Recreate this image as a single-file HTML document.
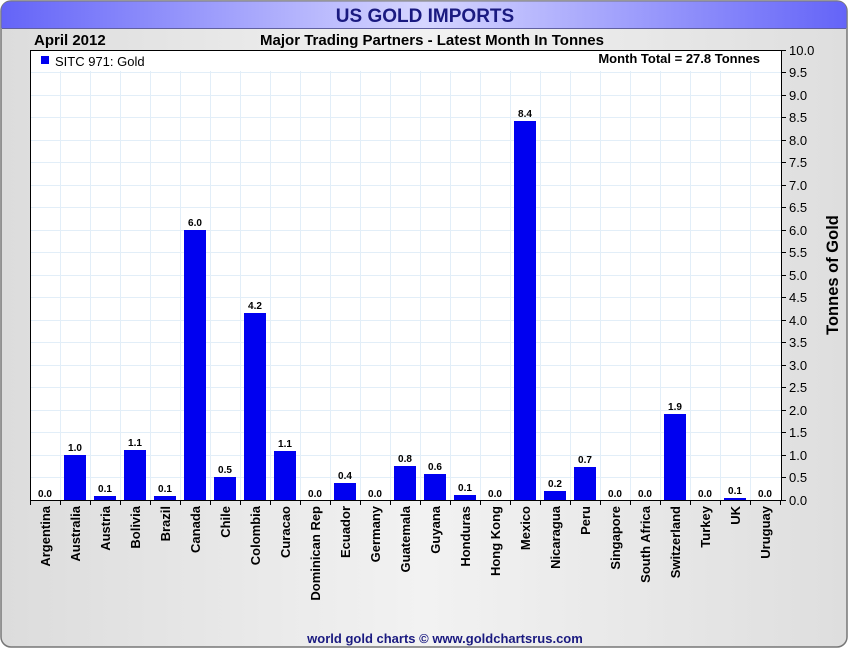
<!DOCTYPE html>
<html><head><style>
html,body{margin:0;padding:0;background:#fff;width:850px;height:650px;overflow:hidden}
svg{display:block;font-family:"Liberation Sans",Arial,sans-serif}
</style></head><body>
<svg width="850" height="650" xmlns="http://www.w3.org/2000/svg">
<defs>
<linearGradient id="tb" x1="0" x2="1" y1="0" y2="0">
<stop offset="0" stop-color="#6464f8"/><stop offset="0.5" stop-color="#d6d6ff"/><stop offset="1" stop-color="#6464f8"/>
</linearGradient>
<linearGradient id="bg" x1="0" x2="1" y1="0" y2="0">
<stop offset="0" stop-color="#dcdcdc"/><stop offset="0.5" stop-color="#f2f2f2"/><stop offset="1" stop-color="#dedede"/>
</linearGradient>
</defs>
<rect x="1" y="1" width="846" height="646" rx="10" fill="url(#bg)" stroke="#777" stroke-width="1.5"/>
<path d="M1.5,28 L1.5,11 Q1.5,1.5 11,1.5 L837,1.5 Q846.5,1.5 846.5,11 L846.5,28 Z" fill="url(#tb)"/>
<line x1="2" y1="28.5" x2="846" y2="28.5" stroke="#6060a0"/>
<text x="425" y="22" text-anchor="middle" font-size="19" font-weight="bold" fill="#1a1a80">US GOLD IMPORTS</text>
<text x="34" y="45" font-size="15" font-weight="bold" fill="#000">April 2012</text>
<text x="432" y="45" text-anchor="middle" font-size="15" font-weight="bold" fill="#000">Major Trading Partners - Latest Month In Tonnes</text>
<rect x="30.5" y="50.5" width="751" height="450" fill="#fff" stroke="#000"/>
<g stroke="#e2eef8" stroke-width="1">
<line x1="60.5" y1="51" x2="60.5" y2="500"/><line x1="90.5" y1="51" x2="90.5" y2="500"/><line x1="120.5" y1="51" x2="120.5" y2="500"/><line x1="150.5" y1="51" x2="150.5" y2="500"/><line x1="180.5" y1="51" x2="180.5" y2="500"/><line x1="210.5" y1="51" x2="210.5" y2="500"/><line x1="240.5" y1="51" x2="240.5" y2="500"/><line x1="270.5" y1="51" x2="270.5" y2="500"/><line x1="300.5" y1="51" x2="300.5" y2="500"/><line x1="330.5" y1="51" x2="330.5" y2="500"/><line x1="360.5" y1="51" x2="360.5" y2="500"/><line x1="390.5" y1="51" x2="390.5" y2="500"/><line x1="420.5" y1="51" x2="420.5" y2="500"/><line x1="450.5" y1="51" x2="450.5" y2="500"/><line x1="480.5" y1="51" x2="480.5" y2="500"/><line x1="510.5" y1="51" x2="510.5" y2="500"/><line x1="540.5" y1="51" x2="540.5" y2="500"/><line x1="570.5" y1="51" x2="570.5" y2="500"/><line x1="600.5" y1="51" x2="600.5" y2="500"/><line x1="630.5" y1="51" x2="630.5" y2="500"/><line x1="660.5" y1="51" x2="660.5" y2="500"/><line x1="690.5" y1="51" x2="690.5" y2="500"/><line x1="720.5" y1="51" x2="720.5" y2="500"/><line x1="750.5" y1="51" x2="750.5" y2="500"/>
<line x1="31" y1="72.5" x2="781" y2="72.5"/><line x1="31" y1="95.5" x2="781" y2="95.5"/><line x1="31" y1="117.5" x2="781" y2="117.5"/><line x1="31" y1="140.5" x2="781" y2="140.5"/><line x1="31" y1="162.5" x2="781" y2="162.5"/><line x1="31" y1="185.5" x2="781" y2="185.5"/><line x1="31" y1="207.5" x2="781" y2="207.5"/><line x1="31" y1="230.5" x2="781" y2="230.5"/><line x1="31" y1="252.5" x2="781" y2="252.5"/><line x1="31" y1="275.5" x2="781" y2="275.5"/><line x1="31" y1="297.5" x2="781" y2="297.5"/><line x1="31" y1="320.5" x2="781" y2="320.5"/><line x1="31" y1="342.5" x2="781" y2="342.5"/><line x1="31" y1="365.5" x2="781" y2="365.5"/><line x1="31" y1="387.5" x2="781" y2="387.5"/><line x1="31" y1="410.5" x2="781" y2="410.5"/><line x1="31" y1="432.5" x2="781" y2="432.5"/><line x1="31" y1="455.5" x2="781" y2="455.5"/><line x1="31" y1="477.5" x2="781" y2="477.5"/>
</g>
<rect x="31" y="51" width="750" height="20" fill="#fff"/>
<rect x="41" y="56" width="8" height="8" fill="#0000f0"/>
<text x="55" y="66" font-size="13" fill="#000">SITC 971: Gold</text>
<text x="760" y="63" text-anchor="end" font-size="13" font-weight="bold" fill="#000">Month Total = 27.8 Tonnes</text>
<g fill="#0000f0">
<rect x="64" y="455" width="22" height="45"/>
<rect x="94" y="496" width="22" height="4"/>
<rect x="124" y="450" width="22" height="50"/>
<rect x="154" y="496" width="22" height="4"/>
<rect x="184" y="230" width="22" height="270"/>
<rect x="214" y="477" width="22" height="23"/>
<rect x="244" y="313" width="22" height="187"/>
<rect x="274" y="451" width="22" height="49"/>
<rect x="334" y="483" width="22" height="17"/>
<rect x="394" y="466" width="22" height="34"/>
<rect x="424" y="474" width="22" height="26"/>
<rect x="454" y="495" width="22" height="5"/>
<rect x="514" y="121" width="22" height="379"/>
<rect x="544" y="491" width="22" height="9"/>
<rect x="574" y="467" width="22" height="33"/>
<rect x="664" y="414" width="22" height="86"/>
<rect x="724" y="498" width="22" height="2"/>
</g>
<g font-size="10" font-weight="bold" text-anchor="middle" fill="#000">
<text x="45" y="497">0.0</text><text x="75" y="451">1.0</text><text x="105" y="492">0.1</text><text x="135" y="446">1.1</text><text x="165" y="492">0.1</text><text x="195" y="226">6.0</text><text x="225" y="473">0.5</text><text x="255" y="309">4.2</text><text x="285" y="447">1.1</text><text x="315" y="497">0.0</text><text x="345" y="479">0.4</text><text x="375" y="497">0.0</text><text x="405" y="462">0.8</text><text x="435" y="470">0.6</text><text x="465" y="491">0.1</text><text x="495" y="497">0.0</text><text x="525" y="117">8.4</text><text x="555" y="487">0.2</text><text x="585" y="463">0.7</text><text x="615" y="497">0.0</text><text x="645" y="497">0.0</text><text x="675" y="410">1.9</text><text x="705" y="497">0.0</text><text x="735" y="494">0.1</text><text x="765" y="497">0.0</text>
</g>
<g stroke="#000">
<line x1="30" y1="500.5" x2="782" y2="500.5"/>
<line x1="781.5" y1="50" x2="781.5" y2="501"/>
<path d="M30.5,500v5M60.5,500v5M90.5,500v5M120.5,500v5M150.5,500v5M180.5,500v5M210.5,500v5M240.5,500v5M270.5,500v5M300.5,500v5M330.5,500v5M360.5,500v5M390.5,500v5M420.5,500v5M450.5,500v5M480.5,500v5M510.5,500v5M540.5,500v5M570.5,500v5M600.5,500v5M630.5,500v5M660.5,500v5M690.5,500v5M720.5,500v5M750.5,500v5M780.5,500v5"/>
<path d="M781,50.5h5M781,72.5h5M781,95.5h5M781,117.5h5M781,140.5h5M781,162.5h5M781,185.5h5M781,207.5h5M781,230.5h5M781,252.5h5M781,275.5h5M781,297.5h5M781,320.5h5M781,342.5h5M781,365.5h5M781,387.5h5M781,410.5h5M781,432.5h5M781,455.5h5M781,477.5h5M781,500.5h5"/>
</g>
<g font-size="13" fill="#000">
<text x="789" y="55">10.0</text><text x="789" y="77">9.5</text><text x="789" y="100">9.0</text><text x="789" y="122">8.5</text><text x="789" y="145">8.0</text><text x="789" y="167">7.5</text><text x="789" y="190">7.0</text><text x="789" y="212">6.5</text><text x="789" y="235">6.0</text><text x="789" y="257">5.5</text><text x="789" y="280">5.0</text><text x="789" y="302">4.5</text><text x="789" y="325">4.0</text><text x="789" y="347">3.5</text><text x="789" y="370">3.0</text><text x="789" y="392">2.5</text><text x="789" y="415">2.0</text><text x="789" y="437">1.5</text><text x="789" y="460">1.0</text><text x="789" y="482">0.5</text><text x="789" y="505">0.0</text>
</g>
<text transform="translate(838,275) rotate(-90)" text-anchor="middle" font-size="16.5" font-weight="bold" fill="#000">Tonnes of Gold</text>
<g font-size="13" font-weight="bold" fill="#000" text-anchor="end">
<text transform="translate(50,506) rotate(-90)">Argentina</text>
<text transform="translate(80,506) rotate(-90)">Australia</text>
<text transform="translate(110,506) rotate(-90)">Austria</text>
<text transform="translate(140,506) rotate(-90)">Bolivia</text>
<text transform="translate(170,506) rotate(-90)">Brazil</text>
<text transform="translate(200,506) rotate(-90)">Canada</text>
<text transform="translate(230,506) rotate(-90)">Chile</text>
<text transform="translate(260,506) rotate(-90)">Colombia</text>
<text transform="translate(290,506) rotate(-90)">Curacao</text>
<text transform="translate(320,506) rotate(-90)">Dominican Rep</text>
<text transform="translate(350,506) rotate(-90)">Ecuador</text>
<text transform="translate(380,506) rotate(-90)">Germany</text>
<text transform="translate(410,506) rotate(-90)">Guatemala</text>
<text transform="translate(440,506) rotate(-90)">Guyana</text>
<text transform="translate(470,506) rotate(-90)">Honduras</text>
<text transform="translate(500,506) rotate(-90)">Hong Kong</text>
<text transform="translate(530,506) rotate(-90)">Mexico</text>
<text transform="translate(560,506) rotate(-90)">Nicaragua</text>
<text transform="translate(590,506) rotate(-90)">Peru</text>
<text transform="translate(620,506) rotate(-90)">Singapore</text>
<text transform="translate(650,506) rotate(-90)">South Africa</text>
<text transform="translate(680,506) rotate(-90)">Switzerland</text>
<text transform="translate(710,506) rotate(-90)">Turkey</text>
<text transform="translate(740,506) rotate(-90)">UK</text>
<text transform="translate(770,506) rotate(-90)">Uruguay</text>
</g>
<text x="445" y="643" text-anchor="middle" font-size="13" font-weight="bold" fill="#1a1a80">world gold charts © www.goldchartsrus.com</text>
</svg>
</body></html>
